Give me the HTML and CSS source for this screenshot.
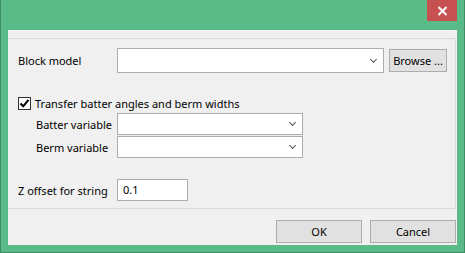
FILE: index.html
```html
<!DOCTYPE html>
<html>
<head>
    <meta charset="utf-8">
    <title>Transfer batters</title>
    <link rel="stylesheet" href="styles.css">
</head>
<body>
    <div class="window">
        <button class="close-btn" aria-label="Close">
            <svg width="11" height="10" viewBox="0 0 11 10"><path d="M1.5 1 L9.5 9 M9.5 1 L1.5 9" stroke="#fff" stroke-width="2"/></svg>
        </button>
        <div class="client">
            <div class="panel">
                <div class="row row-main">
                    <label class="label">Block model</label>
                    <div class="combo combo-wide"><span class="chevron"></span></div>
                    <button class="btn btn-browse">Browse ...</button>
                </div>
                <div class="row row-check">
                    <span class="checkbox">
                        <svg width="11" height="11" viewBox="0 0 11 11"><path d="M1.5 5.5 L4.2 8.3 L9.5 1.8" fill="none" stroke="#000" stroke-width="2"/></svg>
                    </span>
                    <span>Transfer batter angles and berm widths</span>
                </div>
                <div class="row row-sub row-batter">
                    <label class="label label-sub">Batter variable</label>
                    <div class="combo combo-narrow"><span class="chevron"></span></div>
                </div>
                <div class="row row-sub row-berm">
                    <label class="label label-sub">Berm variable</label>
                    <div class="combo combo-narrow"><span class="chevron"></span></div>
                </div>
                <div class="row row-z">
                    <label class="label">Z offset for string</label>
                    <div class="textbox">0.1</div>
                </div>
            </div>
            <div class="footer">
                <button class="btn btn-footer">OK</button>
                <button class="btn btn-footer">Cancel</button>
            </div>
        </div>
    </div>
</body>
</html>
```
FILE: styles.css
```css
* {
    margin: 0;
    padding: 0;
    box-sizing: border-box;
}

body {
    font-family: 'Noto Sans', 'Open Sans', sans-serif;
    font-size: 11px;
    color: #000;
    background: #5bbb88;
}

.window {
    position: relative;
    width: 465px;
    height: 253px;
    background: #5bbb88;
    border: 1px solid #3f8d62;
    border-top: none;
    padding: 30px 7px 7px 7px;
}

.close-btn {
    position: absolute;
    top: 0;
    right: 7px;
    width: 30px;
    height: 21px;
    border: none;
    background: #c75050;
    display: flex;
    align-items: center;
    justify-content: center;
}

.client {
    height: 100%;
    background: #f0f0f0;
    border-top: 1px solid #f7f7f7;
    padding-top: 7px;
    padding-right: 1px;
    display: flex;
    flex-direction: column;
}

.panel {
    height: 171px;
    border-top: 1px solid #dadada;
    border-right: 1px solid #dadada;
    border-bottom: 1px solid #dadada;
    padding-left: 10px;
}

.row {
    display: flex;
    align-items: center;
    white-space: nowrap;
}

.label {
    width: 99px;
    flex-shrink: 0;
}

.label-sub {
    width: 81px;
}

.row-main {
    margin-top: 9px;
    height: 25px;
}

.row-check {
    margin-top: 22px;
    height: 16px;
    gap: 4px;
}

.row-sub {
    padding-left: 18px;
    height: 22px;
}

.row-batter {
    margin-top: 2px;
}

.row-berm {
    margin-top: 1px;
}

.row-z {
    margin-top: 21px;
    height: 22px;
}

.combo {
    position: relative;
    height: 100%;
    background: #fff;
    border: 1px solid #abadb3;
}

.combo-wide {
    width: 267px;
}

.combo-narrow {
    width: 186px;
}

.chevron {
    position: absolute;
    right: 7px;
    top: 50%;
    width: 5px;
    height: 5px;
    margin-top: -4px;
    border-right: 1.5px solid #555;
    border-bottom: 1.5px solid #555;
    transform: rotate(45deg);
}

.textbox {
    width: 71px;
    height: 100%;
    background: #fff;
    border: 1px solid #abadb3;
    padding-left: 5px;
    line-height: 20px;
}

.checkbox {
    width: 13px;
    height: 13px;
    border: 1px solid #333;
    background: #fff;
    display: flex;
    align-items: center;
    justify-content: center;
}

.btn {
    font-family: inherit;
    font-size: 11px;
    color: #000;
    background: #e1e1e1;
    border: 1px solid #adadad;
}

.btn-browse {
    width: 58px;
    height: 23px;
    margin-left: 5px;
}

.footer {
    display: flex;
    justify-content: flex-end;
    gap: 8px;
    padding-top: 11px;
}

.btn-footer {
    width: 86px;
    height: 23px;
}
```
